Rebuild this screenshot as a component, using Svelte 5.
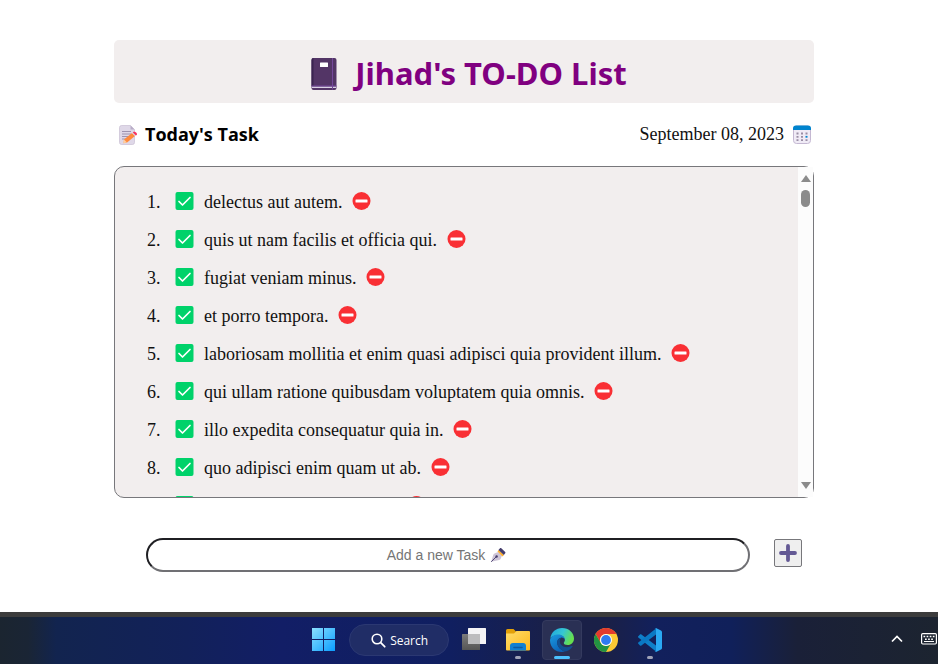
<script>
  let tasks = $state([
    'delectus aut autem.',
    'quis ut nam facilis et officia qui.',
    'fugiat veniam minus.',
    'et porro tempora.',
    'laboriosam mollitia et enim quasi adipisci quia provident illum.',
    'qui ullam ratione quibusdam voluptatem quia omnis.',
    'illo expedita consequatur quia in.',
    'quo adipisci enim quam ut ab.',
    'molestiae perspiciatis ipsa.'
  ]);
  let draft = $state('');

  function add(event) {
    event.preventDefault();
    if (draft.trim()) {
      tasks.push(draft.trim());
      draft = '';
    }
  }
  function remove(index) {
    tasks.splice(index, 1);
  }
</script>

<div class="screen">
  <main>
    <header>
      <svg width="26" height="32" viewBox="0 0 26 32" aria-hidden="true">
        <rect x="0.5" width="25" height="32" rx="2" fill="#533566" />
        <path d="M2.500 0H2a2 2 0 0 0-1.500 2v26h2z" fill="#3a2450" />
        <path d="M21.500 0v28" stroke="#75489b" />
        <path d="M1 28.500h24v1.500H1z" fill="#d9d0e4" />
        <path d="M.5 28h25M21.500 28v3.500" stroke="#75489b" />
        <rect x="9" y="4.500" width="8" height="4.500" rx="0.500" fill="#fff" />
      </svg>
      <h1>Jihad's TO-DO List</h1>
    </header>

    <div class="info">
      <h2>
        <svg width="20" height="20" viewBox="0 0 20 20" aria-hidden="true">
          <path d="M3.500.5h9l4 4v13a2 2 0 0 1-2 2h-11a2 2 0 0 1-2-2v-15a2 2 0 0 1 2-2z" fill="#dfd8e8" stroke="#c8bfd2" stroke-width=".7" />
          <path d="M12.500.5v4h4z" fill="#b9adc8" />
          <path d="M4 6.500h9M4 9h9M4 11.500h7M4 14h4" stroke="#9e93b0" />
          <path d="M6 14.500l8-6.500 3 3-8 6.500-3.500.7z" fill="#ff8a3d" />
          <path d="M6 14.500l-.8 3.800L9 17.500z" fill="#ffd0a0" />
          <path d="M14 8l1-.8 3 3-1 .8z" fill="#d8d8e0" />
          <path d="M15 7.200c1.500-1.600 4.900.8 3.700 2.800l-.8.5-3-3z" fill="#f8315f" />
        </svg>
        Today's Task
      </h2>
      <p>
        September 08, 2023
        <svg width="20" height="20" viewBox="0 0 20 20" aria-hidden="true">
          <rect x="1.500" y="1" width="17" height="17.500" rx="3" fill="#f0ebf6" stroke="#c4b8d2" />
          <path d="M1 5V3.500A3 3 0 0 1 4 .5h12a3 3 0 0 1 3 3V5z" fill="#0084ce" />
          <path d="M4.500 8.500h2M9 8.500h2M13.500 8.500h2M4.500 11.800h2M9 11.800h2M4.500 15.100h2M9 15.100h2M13.500 15.100h2" stroke="#998ea4" stroke-width="1.800" />
          <path d="M13.500 11.800h2" stroke="#0084ce" stroke-width="1.800" />
        </svg>
      </p>
    </div>

    <section class="panel">
      <ol>
        {#each tasks as task, i}
          <li>
            <span class="number">{i + 1}.</span>
            <svg width="19" height="18" viewBox="0 0 19 18" aria-hidden="true">
              <rect x=".5" width="18" height="18" rx="2" fill="#00d26a" />
              <path d="M4 9.500l3.500 3.500 7.500-7.500" fill="none" stroke="#fff" stroke-width="1.700" stroke-linecap="round" stroke-linejoin="round" />
            </svg>
            <span class="task">{task}</span>
            <button class="remove" type="button" aria-label="Remove task" onclick={() => remove(i)}>
              <svg width="19" height="18" viewBox="0 0 19 18" aria-hidden="true">
                <circle cx="9.500" cy="9" r="9" fill="#f92f34" />
                <rect x="3.500" y="7.500" width="12" height="3" rx=".5" fill="#fff" />
              </svg>
            </button>
          </li>
        {/each}
      </ol>
      <div class="scrollbar" aria-hidden="true">
        <svg width="10" height="7" viewBox="0 0 10 7"><path d="M5 0l5 7H0z" fill="#8b8b8b" /></svg>
        <span class="thumb"></span>
        <svg width="10" height="7" viewBox="0 0 10 7"><path d="M5 7L0 0h10z" fill="#8b8b8b" /></svg>
      </div>
    </section>

    <form onsubmit={add}>
      <div class="field">
        <input type="text" aria-label="New task" placeholder="Add a new Task" bind:value={draft} />
        {#if !draft}
          <svg class="pen" width="16" height="16" viewBox="0 0 16 16" aria-hidden="true">
            <path d="M1.200 14.800L3.200 8c.3-.9.900-1.500 1.800-1.800L8.200 5l3.800 3.500-1.200 3c-.3.800-.8 1.200-1.600 1.500z" fill="#cdc4d6" />
            <path d="M1.200 14.800L6.200 9.800" stroke="#433b6b" stroke-width=".9" />
            <circle cx="6.600" cy="9.500" r="1.200" fill="#433b6b" />
            <path d="M7.500 4.500l1-1.500 5.500 5-1.500 1.500z" fill="#ffb02e" />
            <path d="M8.500 3L10 1.200c.4-.4.900-.4 1.300 0L15.200 5c.4.400.4.900 0 1.300L13.800 8z" fill="#433b6b" />
          </svg>
        {/if}
      </div>
      <button class="add" type="submit" aria-label="Add task">
        <svg width="20" height="20" viewBox="0 0 20 20" aria-hidden="true">
          <path d="M10 3v14M3 10h14" stroke="#635994" stroke-width="3.800" stroke-linecap="round" />
        </svg>
      </button>
    </form>
  </main>

  <footer>
    <nav aria-label="Taskbar">
      <button class="tile start" type="button" aria-label="Start">
        <svg width="24" height="24" viewBox="0 0 24 24">
          <defs>
            <linearGradient id="win" x1="0" y1="0" x2="1" y2="1">
              <stop offset="0" stop-color="#8be0ff" /><stop offset="1" stop-color="#0a9dff" />
            </linearGradient>
            <mask id="panes"><path d="M1 0h11v11H1zM13 0h11v11H13zM1 12h11v11H1zM13 12h11v11H13z" fill="#fff" /></mask>
          </defs>
          <rect x="1" width="23" height="23" fill="url(#win)" mask="url(#panes)" />
        </svg>
      </button>
      <button class="search" type="button">
        <svg width="16" height="16" viewBox="0 0 16 16" aria-hidden="true">
          <circle cx="7" cy="6" r="4.800" fill="none" stroke="#fff" stroke-width="1.600" />
          <path d="M10.700 9.700l4 4" stroke="#fff" stroke-width="1.800" stroke-linecap="round" />
        </svg>
        Search
      </button>
      <button class="tile" type="button" aria-label="Task view">
        <svg width="24" height="24" viewBox="0 0 24 24">
          <defs>
            <linearGradient id="view" x1="0" y1="0" x2="0" y2="1">
              <stop offset="0" stop-color="#7b7b7b" /><stop offset="1" stop-color="#555" />
            </linearGradient>
          </defs>
          <rect y="6" width="18" height="16" rx=".5" fill="url(#view)" />
          <rect x="6" width="18" height="16" rx=".5" fill="#f4f4f6" />
          <rect x="6" y="6" width="12" height="10" fill="#bcbcbe" />
        </svg>
      </button>
      <button class="tile running" type="button" aria-label="File Explorer">
        <svg width="24" height="24" viewBox="0 0 24 24">
          <defs>
            <linearGradient id="folder" x1="0" y1="0" x2="1" y2="1">
              <stop offset="0" stop-color="#ffdc6a" /><stop offset="1" stop-color="#fcb91c" />
            </linearGradient>
          </defs>
          <path d="M0 2.500A1.500 1.500 0 0 1 1.500 1h6L10 3.500h13V9H0z" fill="#e2a009" />
          <path d="M0 5.500h8L10.500 3H23a1 1 0 0 1 1 1v17.500a1 1 0 0 1-1 1H1a1 1 0 0 1-1-1z" fill="url(#folder)" />
          <path d="M4 22.500V18a3 3 0 0 1 3-3h10a3 3 0 0 1 3 3v4.500z" fill="#0f80d2" />
          <path d="M8 19.500h8" stroke="#0a5aa2" stroke-width="1.600" stroke-linecap="round" />
        </svg>
      </button>
      <button class="tile active" type="button" aria-label="Edge">
        <svg width="24" height="24" viewBox="0 0 24 24">
          <defs>
            <linearGradient id="wave" x1="0" y1="0" x2="1" y2=".4">
              <stop offset="0" stop-color="#1fa4df" /><stop offset=".55" stop-color="#35c6d4" /><stop offset="1" stop-color="#66e04f" />
            </linearGradient>
            <linearGradient id="body" x1="0" y1="0" x2=".6" y2="1">
              <stop offset="0" stop-color="#1c9be0" /><stop offset="1" stop-color="#0b62b8" />
            </linearGradient>
          </defs>
          <path d="M.3 10C1.300 4.200 6 0 12 0c7 0 12 5 12 10.500 0 4-2.800 6.500-6.300 6.500-2.600 0-3.900-1-3.900-2 0-.8 1.100-1.200 1.100-3C14.900 9.500 12 7 8.500 7 4.800 7 1.500 8.600.3 10z" fill="url(#wave)" />
          <path d="M.2 11C1.200 8.500 4.500 6.500 8.500 6.500c3.500 0 6.400 2.500 6.400 5.200-1-1.700-2.600-2.400-4.100-2C7 10.500 6.200 15 8.300 18.500c1.400 2.400 4 4.200 6.700 5C8 25.500.1 21 0 12.500z" fill="url(#body)" />
          <path d="M8.300 18.500c-2.100-3.500-1.300-8 2.500-8.800-1.400 2.500-1.300 5.300.6 7.300 2.600 2.700 6.900 2.700 10.100 1.100.8-.4 1.300.1.900.7-1.600 2.500-4.400 4.300-7.400 4.700-2.700-.8-5.300-2.600-6.700-5z" fill="#124f91" />
        </svg>
      </button>
      <button class="tile" type="button" aria-label="Chrome">
        <svg width="24" height="24" viewBox="0 0 24 24">
          <circle cx="12" cy="12" r="12" fill="#fcc934" />
          <path d="M1.600 6A12 12 0 0 1 22.400 6H12a6 6 0 0 0-5.200 9z" fill="#e33b2e" />
          <path d="M1.600 6l5.200 9a6 6 0 0 0 10.400 0L12 24A12 12 0 0 1 1.600 6z" fill="#229342" />
          <circle cx="12" cy="12" r="6" fill="#fff" />
          <circle cx="12" cy="12" r="4.900" fill="#2f7bf0" />
        </svg>
      </button>
      <button class="tile running" type="button" aria-label="Visual Studio Code">
        <svg width="24" height="24" viewBox="0 0 24 24">
          <path d="M.3 8.200L2 6.600c.4-.4.900-.4 1.400 0L18 17.500V23.500L.3 9.600C-.1 9.200-.1 8.600.3 8.200z" fill="#0f7fc9" />
          <path d="M.3 15.800L2 17.400c.4.400.9.400 1.400 0L18 6.500V.5L.3 14.400c-.4.400-.4 1 0 1.400z" fill="#0a78c4" />
          <path d="M16.700.5C17 .1 17.500-.1 18 .1l5 2.400c.6.300 1 .9 1 1.600v15.800c0 .7-.4 1.300-1 1.600l-5 2.400c-.5.200-1 0-1.300-.4.500.4 1.300 0 1.300-.7V1.200c0-.7-.8-1.100-1.300-.7z" fill="#2aa9f3" />
        </svg>
      </button>
    </nav>
    <div class="tray">
      <button type="button" aria-label="Show hidden icons">
        <svg width="12" height="8" viewBox="0 0 12 8"><path d="M1 6.500l5-5 5 5" fill="none" stroke="#fff" stroke-width="1.700" /></svg>
      </button>
      <button type="button" aria-label="Touch keyboard">
        <svg width="16" height="12" viewBox="0 0 16 12">
          <rect x=".6" y=".6" width="14.800" height="10.400" rx="1.200" fill="none" stroke="#fff" stroke-width="1.200" />
          <path d="M2.500 3.500h11" stroke="#fff" stroke-width="1.500" stroke-dasharray="1.700 1.400" />
          <path d="M4 6.200h8" stroke="#fff" stroke-width="1.500" stroke-dasharray="1.700 1.400" />
          <path d="M3 8.500h10" stroke="#fff" />
        </svg>
      </button>
    </div>
  </footer>
</div>

<style>
  :global(body) {
    margin: 0;
    background: #fff;
  }
  .screen {
    display: flex;
    flex-direction: column;
    min-height: 100vh;
    font-family: 'Liberation Serif', 'Times New Roman', serif;
    color: #111;
  }
  svg {
    display: block;
    flex: none;
  }
  button {
    padding: 0;
    border: 0;
    background: none;
    cursor: pointer;
  }
  main {
    flex: 1;
    box-sizing: border-box;
    width: 100%;
    max-width: 710px;
    margin: 0 auto;
    padding: 40px 10px 40px 0;
  }
  header {
    display: flex;
    align-items: center;
    justify-content: center;
    gap: 18px;
    padding: 10px 0 6px 10px;
    border-radius: 5px;
    background: #f2eeee;
  }
  h1,
  h2 {
    margin: 0;
    font-family: 'Noto Sans', 'Open Sans', sans-serif;
    font-weight: 700;
  }
  h1 {
    font-size: 31px;
    line-height: 47px;
    color: purple;
  }
  .info {
    display: flex;
    align-items: center;
    justify-content: space-between;
    padding: 16px 2px 16px 4px;
  }
  h2,
  .info p {
    display: flex;
    align-items: center;
    gap: 8px;
    margin: 0;
    font-size: 18px;
    line-height: 31px;
  }
  h2 {
    gap: 7px;
    font-family: 'Open Sans', 'Noto Sans', sans-serif;
    color: #000;
  }
  .panel {
    display: flex;
    box-sizing: border-box;
    height: 50vh;
    border: 1px solid #77777b;
    border-radius: 10px;
    background: #f2eeee;
  }
  ol {
    flex: 1;
    margin: 0;
    padding: 15px 32px;
    list-style: none;
    overflow-y: auto;
    scrollbar-width: none;
    font-size: 18px;
  }
  li {
    display: flex;
    align-items: center;
    height: 38px;
  }
  .number,
  .task {
    padding-top: 3px;
  }
  .number {
    width: 28px;
  }
  .task {
    margin: 0 10px;
  }
  .scrollbar {
    display: flex;
    flex-direction: column;
    align-items: center;
    width: 15px;
    padding: 8px 0;
    background: #fcfcfc;
  }
  .thumb {
    width: 9px;
    height: 17px;
    margin: 8px 0 auto;
    border-radius: 5px;
    background: #8b8b8b;
  }
  form {
    display: flex;
    align-items: center;
    gap: 24px;
    padding: 40px 12px 0 32px;
  }
  .field {
    position: relative;
    flex: 1;
  }
  input {
    display: block;
    box-sizing: border-box;
    width: 100%;
    height: 34px;
    padding: 0 24px 0 0;
    border: 2px solid;
    border-color: #1f1f23 #707074 #707074 #1f1f23;
    border-radius: 17px;
    background: #fff;
    font-family: 'Liberation Sans', Arial, sans-serif;
    font-size: 14px;
    text-align: center;
  }
  input::placeholder {
    color: #757575;
    opacity: 1;
  }
  .pen {
    position: absolute;
    top: 9px;
    left: calc(50% + 42px);
    pointer-events: none;
  }
  .add {
    display: grid;
    place-items: center;
    width: 28px;
    height: 28px;
    margin-bottom: 4px;
    border: 1px solid #77777b;
    border-radius: 2px;
    background: #efefef;
  }
  footer {
    display: grid;
    grid-template-columns: 53fr auto 47fr;
    align-items: center;
    height: 47px;
    border-top: 5px solid #3c3c3c;
    background: linear-gradient(90deg, #1b2530 0, #1a2535 3%, #12244f 6%, #12215a 20%, #121e66 30%, #101f60 48%, #1a2046 60%, #1a2048 65%, #12205c 70%, #10205a 78%, #1a2038 85%, #1c2430 100%);
  }
  nav {
    grid-column: 2;
    display: flex;
    align-items: center;
    gap: 4px;
    margin-bottom: 1px;
  }
  .tile {
    position: relative;
    display: grid;
    place-items: center;
    box-sizing: border-box;
    width: 40px;
    height: 40px;
    border-radius: 4px;
  }
  .start {
    margin-right: 2px;
  }
  .active {
    background: #2a3054;
    border: 1px solid #343a5e;
  }
  .running::after,
  .active::after {
    content: '';
    position: absolute;
    bottom: 1px;
    left: 50%;
    width: 6px;
    height: 3px;
    margin-left: -3px;
    border-radius: 2px;
    background: #a0a3b8;
  }
  .active::after {
    bottom: 0;
    width: 16px;
    margin-left: -8px;
    background: #4cc2ff;
  }
  .search {
    display: flex;
    align-items: center;
    justify-content: center;
    gap: 4px;
    box-sizing: border-box;
    width: 100px;
    height: 32px;
    margin-right: 1px;
    padding: 1px 0 0 1px;
    border: 1px solid #2b3872;
    border-radius: 16px;
    background: #202d66;
    color: #fff;
    font-family: 'Open Sans', 'Noto Sans', sans-serif;
    font-size: 12px;
    font-weight: 500;
  }
  .tray {
    display: flex;
    align-items: center;
    justify-content: flex-end;
    gap: 18px;
    margin-bottom: 3px;
    padding-right: 1px;
  }
</style>
